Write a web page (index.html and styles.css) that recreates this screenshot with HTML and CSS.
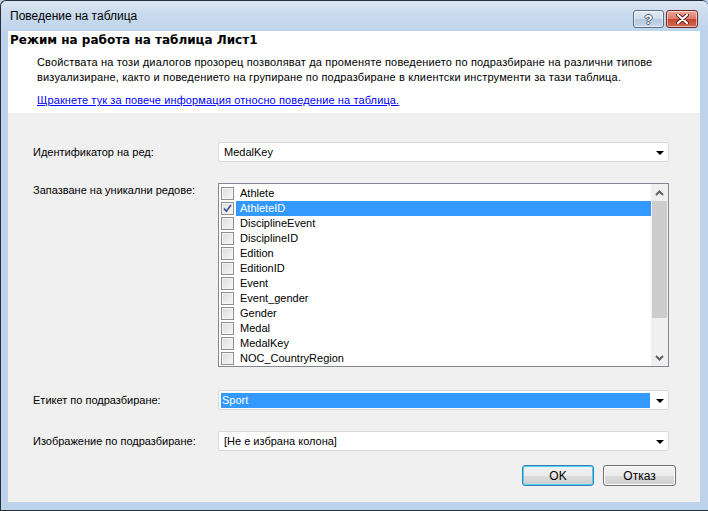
FILE: index.html
```html
<!DOCTYPE html>
<html lang="bg">
<head>
<meta charset="UTF-8">
<title>Поведение на таблица</title>
<link rel="stylesheet" href="styles.css">
</head>
<body>
<div class="window">
    <div class="titlebar">
        <span class="title">Поведение на таблица</span>
        <div class="caption-btns">
            <span class="cap-btn help">?</span>
            <span class="cap-btn close">
                <svg width="13" height="10" viewBox="0 0 13 10">
                    <path d="M2 1 L11 9 M11 1 L2 9" stroke="#5b1c14" stroke-width="4" stroke-linecap="round"/>
                    <path d="M2 1 L11 9 M11 1 L2 9" stroke="#ffffff" stroke-width="2.2" stroke-linecap="round"/>
                </svg>
            </span>
        </div>
    </div>
    <div class="client">
        <div class="header">
            <div class="header-title">Режим на работа на таблица Лист1</div>
            <p class="desc">Свойствата на този диалогов прозорец позволяват да променяте поведението по подразбиране на различни типове визуализиране, както и поведението на групиране по подразбиране в клиентски инструменти за тази таблица.</p>
            <a class="more" href="#">Щракнете тук за повече информация относно поведение на таблица.</a>
        </div>
        <div class="form">
            <label class="lbl">Идентификатор на ред:</label>
            <div class="combo">
                <span class="combo-text">MedalKey</span>
                <span class="arrow"></span>
            </div>

            <label class="lbl lbl-top">Запазване на уникални редове:</label>
            <div class="listbox">
                <ul class="items">
                    <li><span class="chk"></span><span class="item">Athlete</span></li>
                    <li><span class="chk checked"><svg width="11" height="11" viewBox="0 0 11 11"><path d="M2 5.5 L4.3 8.3 L9 2" fill="none" stroke="#3a4f98" stroke-width="1.6"/></svg></span><span class="item selected">AthleteID</span></li>
                    <li><span class="chk"></span><span class="item">DisciplineEvent</span></li>
                    <li><span class="chk"></span><span class="item">DisciplineID</span></li>
                    <li><span class="chk"></span><span class="item">Edition</span></li>
                    <li><span class="chk"></span><span class="item">EditionID</span></li>
                    <li><span class="chk"></span><span class="item">Event</span></li>
                    <li><span class="chk"></span><span class="item">Event_gender</span></li>
                    <li><span class="chk"></span><span class="item">Gender</span></li>
                    <li><span class="chk"></span><span class="item">Medal</span></li>
                    <li><span class="chk"></span><span class="item">MedalKey</span></li>
                    <li><span class="chk"></span><span class="item">NOC_CountryRegion</span></li>
                </ul>
                <div class="scrollbar">
                    <span class="sb-btn">
                        <svg width="9" height="6" viewBox="0 0 9 6"><path d="M1 5 L4.5 1.5 L8 5" fill="none" stroke="#606060" stroke-width="2"/></svg>
                    </span>
                    <span class="sb-thumb"></span>
                    <span class="sb-track"></span>
                    <span class="sb-btn">
                        <svg width="9" height="6" viewBox="0 0 9 6"><path d="M1 1 L4.5 4.5 L8 1" fill="none" stroke="#606060" stroke-width="2"/></svg>
                    </span>
                </div>
            </div>

            <label class="lbl lbl-gap">Етикет по подразбиране:</label>
            <div class="combo lbl-gap">
                <span class="combo-text sel">Sport</span>
                <span class="arrow"></span>
            </div>

            <label class="lbl">Изображение по подразбиране:</label>
            <div class="combo">
                <span class="combo-text">[Не е избрана колона]</span>
                <span class="arrow"></span>
            </div>
        </div>
        <div class="buttons">
            <button class="btn default">OK</button>
            <button class="btn">Отказ</button>
        </div>
    </div>
</div>
</body>
</html>
```

FILE: styles.css
```css
body {
    margin: 0;
    font-family: "Liberation Sans", Arial, sans-serif;
    font-size: 11px;
    color: #000;
    background: #bdd3eb;
    overflow: hidden;
}
.window {
    width: 708px;
    height: 511px;
    box-sizing: border-box;
    border-left: 1px solid #2a2f36;
    border-top: 1px solid #2a2f36;
    border-bottom: 1px solid #2a2f36;
    border-radius: 6px 6px 0 0;
    background: #bdd3eb;
    display: flex;
    flex-direction: column;
}
.titlebar {
    height: 30px;
    flex: none;
    display: flex;
    align-items: center;
    justify-content: space-between;
    padding-left: 9px;
    border-radius: 6px 6px 0 0;
    background: linear-gradient(#dbe6f3, #c9dbee 45%, #bed4ec);
}
.title {
    font-size: 12px;
    color: #000;
}
.caption-btns {
    display: flex;
    gap: 2px;
    margin-right: 10px;
    align-self: flex-start;
    margin-top: 9px;
}
.cap-btn {
    width: 29px;
    height: 16px;
    border: 1px solid #5d6f88;
    border-radius: 3px;
    display: flex;
    align-items: center;
    justify-content: center;
    box-shadow: inset 0 0 0 1px rgba(255,255,255,0.55);
}
.help {
    background: linear-gradient(#e2ebf6, #cfdcec 50%, #b7c9e0 51%, #c6d6ea);
    color: #fff;
    font-weight: bold;
    font-size: 13px;
    text-shadow: 1px 0 0 #4c5a70, -1px 0 0 #4c5a70, 0 1px 0 #4c5a70, 0 -1px 0 #4c5a70;
}
.close {
    width: 30px;
    border-color: #6e2a22;
    background: linear-gradient(#eba89b, #dc7c6c 50%, #c8452f 51%, #d46a52);
}
.client {
    height: 471px;
    margin: 0 8px 0 7px;
    background: #f0f0f0;
    display: flex;
    flex-direction: column;
}
.header {
    height: 82px;
    box-sizing: border-box;
    background: #fff;
    padding: 2px 0 0 2px;
}
.header-title {
    font-family: "DejaVu Sans", sans-serif;
    font-weight: bold;
    font-size: 12px;
    line-height: 14px;
}
.desc {
    margin: 8px 0 0 27px;
    width: 650px;
    line-height: 15px;
    letter-spacing: 0.17px;
}
.more {
    display: inline-block;
    margin: 8px 0 0 27px;
    line-height: 15px;
    letter-spacing: 0.12px;
    color: #0000ff;
}
.form {
    display: grid;
    grid-template-columns: 185px 451px;
    row-gap: 21px;
    padding: 29px 0 0 25px;
}
.lbl {
    align-self: center;
}
.lbl-top {
    align-self: start;
    padding-top: 1px;
}
.lbl-gap {
    margin-top: 2px;
}
.combo {
    height: 20px;
    box-sizing: border-box;
    border: 1px solid #dadada;
    border-radius: 2px;
    background: #fff;
    display: flex;
    align-items: center;
    padding: 2px;
}
.combo-text {
    flex: 1;
    height: 15px;
    line-height: 15px;
    padding-left: 3px;
}
.combo-text.sel {
    background: #3399ff;
    color: #fff;
    padding-left: 1px;
}
.arrow {
    width: 0;
    height: 0;
    border-left: 4px solid transparent;
    border-right: 4px solid transparent;
    border-top: 4px solid #000;
    margin: 1px 2px 0 6px;
}
.listbox {
    height: 184px;
    box-sizing: border-box;
    border: 1px solid #828790;
    background: #fff;
    display: flex;
}
.items {
    flex: 1;
    list-style: none;
    margin: 0;
    padding: 2px 0 0 0;
}
.items li {
    height: 15px;
    display: flex;
    align-items: center;
}
.chk {
    width: 11px;
    height: 11px;
    margin: 0 2px 0 2px;
    border: 1px solid #8f8f8f;
    background: linear-gradient(135deg, #dcdcdc, #f7f7f7);
    box-shadow: inset 0 0 0 1px #f4f4f4;
    display: flex;
    align-items: center;
    justify-content: center;
}
.item {
    flex: 1;
    height: 15px;
    line-height: 15px;
    padding-left: 4px;
}
.item.selected {
    background: #3399ff;
    color: #fff;
}
.scrollbar {
    width: 17px;
    display: flex;
    flex-direction: column;
    background: #f0f0f0;
}
.sb-btn {
    height: 17px;
    display: flex;
    align-items: center;
    justify-content: center;
}
.sb-thumb {
    height: 117px;
    margin: 0 1px;
    background: #cdcdcd;
}
.sb-track {
    flex: 1;
}
.buttons {
    display: flex;
    justify-content: flex-end;
    gap: 9px;
    padding: 14px 24px 0 0;
}
.btn {
    width: 73px;
    height: 21px;
    font-family: "Liberation Sans", Arial, sans-serif;
    font-size: 12px;
    border: 1px solid #707070;
    border-radius: 3px;
    background: linear-gradient(#f2f2f2, #ebebeb 50%, #dddddd 51%, #cfcfcf);
    box-shadow: inset 0 0 0 1px #fcfcfc;
    padding: 0;
}
.btn.default {
    width: 72px;
    border-color: #3c7fb1;
    box-shadow: inset 0 0 0 1px #48d2f8;
}
```
